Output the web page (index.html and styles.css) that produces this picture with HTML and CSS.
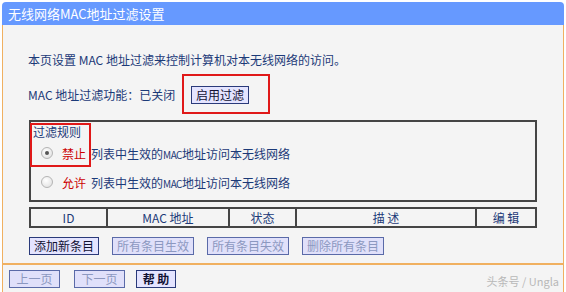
FILE: index.html
```html
<!DOCTYPE html>
<html lang="zh">
<head>
<meta charset="utf-8">
<link rel="stylesheet" href="styles.css">
</head>
<body>
<div class="page">
  <div class="title">无线网络MAC地址过滤设置</div>
  <div class="content">
    <div class="intro">本页设置 MAC 地址过滤来控制计算机对本无线网络的访问。</div>
    <div class="status-row">
      <span class="label">MAC 地址过滤功能：已关闭</span>
      <div class="mark mark-btn"><button class="btn">启用过滤</button></div>
    </div>
    <div class="rules">
      <div class="mark mark-rules"></div>
      <div class="rules-title">过滤规则</div>
      <label class="rule"><span class="radio checked"></span><span class="red">禁止</span><span class="rule-text">列表中生效的<span class="mac">MAC</span>地址访问本无线网络</span></label>
      <label class="rule"><span class="radio"></span><span class="red">允许</span><span class="rule-text">列表中生效的<span class="mac">MAC</span>地址访问本无线网络</span></label>
    </div>
    <div class="table">
      <div class="cell c-id">ID</div>
      <div class="cell c-mac">MAC 地址</div>
      <div class="cell c-state">状态</div>
      <div class="cell c-desc">描 述</div>
      <div class="cell c-edit">编 辑</div>
    </div>
    <div class="actions">
      <button class="btn">添加新条目</button>
      <button class="btn off">所有条目生效</button>
      <button class="btn off">所有条目失效</button>
      <button class="btn off">删除所有条目</button>
    </div>
  </div>
  <div class="footer">
    <button class="btn off pg">上一页</button>
    <button class="btn off pg">下一页</button>
    <button class="btn help">帮 助</button>
    <span class="watermark">头条号 / Ungla</span>
  </div>
</div>
</body>
</html>
```
FILE: styles.css
```css
* { box-sizing: border-box; }
html, body { margin: 0; padding: 0; background: #ffffff; }
body {
  font-family: "Noto Sans CJK SC", "DejaVu Sans", sans-serif;
  font-size: 12px;
  color: #1c3a78;
}
.page {
  width: 562px;
  margin: 2px 0 0 2px;
}
.title {
  height: 23px;
  line-height: 23px;
  background: #6699ff;
  color: #ffffff;
  font-size: 13px;
  padding-left: 6px;
  border-radius: 4px 4px 0 0;
}
.content {
  background: #f4f4f4;
  border-left: 1px solid #f0b060;
  border-right: 1px solid #f0b060;
  padding: 27px 0 8px 25px;
}
.intro {
  height: 16px;
  line-height: 16px;
}
.status-row {
  display: flex;
  align-items: center;
  height: 40px;
  margin-top: 6px;
}
.label { width: 154px; }
.mark { border: 2px solid #e01818; }
.mark-btn {
  width: 88px;
  height: 40px;
  padding: 10px 0 0 7px;
}
.btn {
  font-family: "Noto Sans CJK SC", "DejaVu Sans", sans-serif;
  font-size: 12px;
  height: 18px;
  line-height: 14px;
  padding: 0 4px;
  background: #e4e4ff;
  border: 1px solid #2a3a7a;
  color: #111133;
  margin: 0;
}
.btn.off {
  color: #8c98c0;
  border-color: #5a6aa8;
  background: #e0e0fa;
}
.rules {
  position: relative;
  margin: 6px 0 0 1px;
  width: 508px;
  height: 82px;
  border: 2px solid #454545;
  padding: 2px 0 0 2px;
}
.mark-rules {
  position: absolute;
  left: -1px;
  top: 1px;
  width: 61px;
  height: 44px;
}
.rules-title {
  height: 16px;
  line-height: 16px;
}
.rule {
  display: flex;
  align-items: center;
  height: 18px;
  margin-top: 4px;
  padding-left: 8px;
}
.rule + .rule { margin-top: 11px; }
.mac { font-size: 10px; letter-spacing: -0.5px; }
.radio {
  width: 12px;
  height: 12px;
  border-radius: 50%;
  border: 1px solid #b4b4b4;
  background: radial-gradient(circle at 40% 35%, #ffffff, #dcdcdc);
  margin-right: 9px;
  position: relative;
}
.radio.checked::after {
  content: "";
  position: absolute;
  left: 3px;
  top: 3px;
  width: 4px;
  height: 4px;
  border-radius: 50%;
  background: #555555;
}
.red { color: #cc0000; width: 29px; }
.table {
  display: flex;
  margin: 5px 0 0 1px;
  width: 508px;
  height: 21px;
  border: 2px solid #454545;
}
.cell {
  line-height: 17px;
  text-align: center;
  border-right: 2px solid #454545;
}
.cell:last-child { border-right: none; }
.c-id { width: 77px; }
.c-mac { width: 122px; }
.c-state { width: 67px; }
.c-desc { width: 180px; }
.c-edit { flex: 1; }
.actions {
  display: flex;
  gap: 13px;
  margin: 9px 0 0 1px;
}
.footer {
  display: flex;
  align-items: center;
  gap: 14px;
  height: 30px;
  background: #f4f4f4;
  border: 1px solid #f0b060;
  border-top: 2px solid #f0b060;
  padding: 0 0 0 6px;
  position: relative;
}
.pg { width: 51px; }
.help { width: 40px; margin-left: -3px; color: #111133; font-weight: bold; }
.watermark {
  position: absolute;
  right: 4px;
  bottom: 3px;
  color: #b8b8b8;
  font-size: 11px;
}
```
